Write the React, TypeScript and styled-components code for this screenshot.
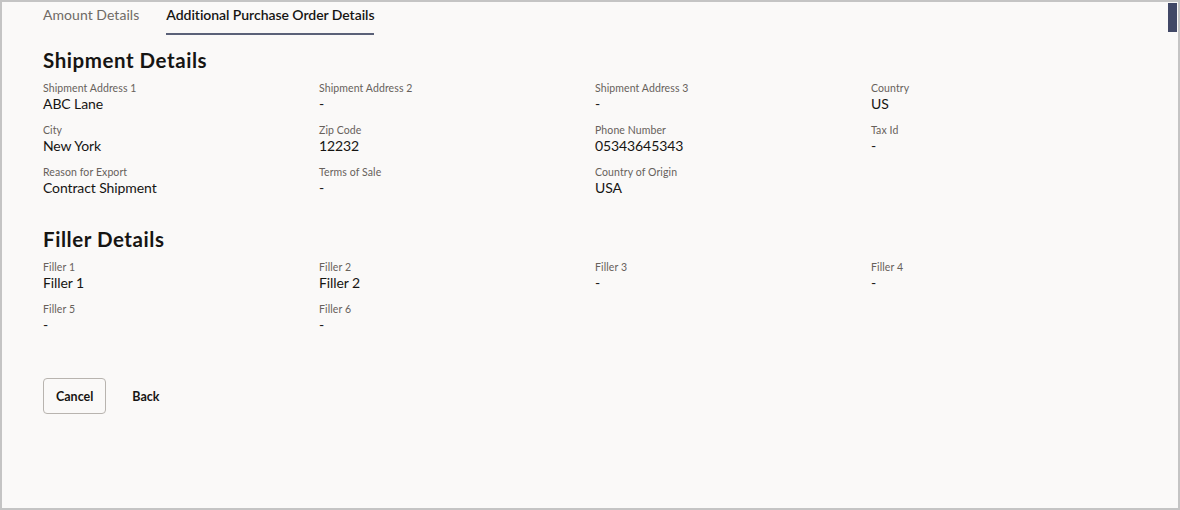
import React from "react";
import styled, { createGlobalStyle } from "styled-components";

const GlobalStyle = createGlobalStyle`
  html, body { margin: 0; padding: 0; background: #ffffff; }
  body { font-family: Lato, "Noto Sans", sans-serif; color: #161513; }
  * { box-sizing: border-box; }
`;

const Frame = styled.div`
  width: 1180px;
  height: 510px;
  border: 2px solid #c4c4c4;
  background: #faf9f8;
  display: flex;
  overflow: hidden;
`;

const Content = styled.main`
  flex: 1;
  padding-left: 41px;
  display: flex;
  flex-direction: column;
`;

const ScrollTrack = styled.div`
  width: 10px;
  display: flex;
  flex-direction: column;
  padding-top: 1px;
`;

const ScrollThumb = styled.div`
  width: 9px;
  height: 29px;
  background: #414866;
`;

const TabBar = styled.nav`
  display: flex;
  gap: 27px;
`;

const Tab = styled.div<{ $active?: boolean }>`
  font-size: 14px;
  line-height: 22px;
  padding-top: 2px;
  padding-bottom: 7px;
  color: ${(p) => (p.$active ? "#161513" : "#6f6a65")};
  font-weight: ${(p) => (p.$active ? 600 : 400)};
  letter-spacing: ${(p) => (p.$active ? "-0.05px" : "0.05px")};
  border-bottom: 2px solid ${(p) => (p.$active ? "#5a6178" : "transparent")};
`;

const Section = styled.section<{ $top: number }>`
  margin-top: ${(p) => p.$top}px;
`;

const Heading = styled.h2`
  margin: 0 0 7px;
  font-size: 20.5px;
  line-height: 28px;
  font-weight: 700;
  letter-spacing: 0.55px;
  color: #161513;
`;

const FieldGrid = styled.div`
  display: grid;
  grid-template-columns: repeat(4, 276px);
  row-gap: 10px;
`;

const Field = styled.div`
  display: flex;
  flex-direction: column;
`;

const Label = styled.span`
  font-size: 10.5px;
  line-height: 14px;
  letter-spacing: 0.1px;
  color: #67615b;
`;

const Value = styled.span`
  font-size: 14px;
  line-height: 18px;
  letter-spacing: -0.1px;
  color: #161513;
`;

const Actions = styled.div`
  margin-top: 44px;
  display: flex;
  align-items: center;
  gap: 13px;
`;

const Button = styled.button<{ $outlined?: boolean }>`
  height: 36px;
  padding: 0 ${(p) => (p.$outlined ? "12px" : "12px")};
  min-width: ${(p) => (p.$outlined ? "63px" : "auto")};
  border: 1px solid ${(p) => (p.$outlined ? "#b8b4af" : "transparent")};
  border-radius: 4px;
  background: transparent;
  font-family: Lato, "Noto Sans", sans-serif;
  font-size: 12.5px;
  font-weight: 700;
  color: #161513;
  cursor: pointer;
`;

type F = [string, string];

const shipment: F[] = [
  ["Shipment Address 1", "ABC Lane"],
  ["Shipment Address 2", "-"],
  ["Shipment Address 3", "-"],
  ["Country", "US"],
  ["City", "New York"],
  ["Zip Code", "12232"],
  ["Phone Number", "05343645343"],
  ["Tax Id", "-"],
  ["Reason for Export", "Contract Shipment"],
  ["Terms of Sale", "-"],
  ["Country of Origin", "USA"],
];

const filler: F[] = [
  ["Filler 1", "Filler 1"],
  ["Filler 2", "Filler 2"],
  ["Filler 3", "-"],
  ["Filler 4", "-"],
  ["Filler 5", "-"],
  ["Filler 6", "-"],
];

const Fields = ({ items }: { items: F[] }) => (
  <FieldGrid>
    {items.map(([l, v]) => (
      <Field key={l}>
        <Label>{l}</Label>
        <Value>{v}</Value>
      </Field>
    ))}
  </FieldGrid>
);

export default function App() {
  return (
    <>
      <GlobalStyle />
      <Frame>
        <Content>
          <TabBar>
            <Tab>Amount Details</Tab>
            <Tab $active>Additional Purchase Order Details</Tab>
          </TabBar>
          <Section $top={11}>
            <Heading>Shipment Details</Heading>
            <Fields items={shipment} />
          </Section>
          <Section $top={28}>
            <Heading>Filler Details</Heading>
            <Fields items={filler} />
          </Section>
          <Actions>
            <Button $outlined>Cancel</Button>
            <Button>Back</Button>
          </Actions>
        </Content>
        <ScrollTrack>
          <ScrollThumb />
        </ScrollTrack>
      </Frame>
    </>
  );
}
